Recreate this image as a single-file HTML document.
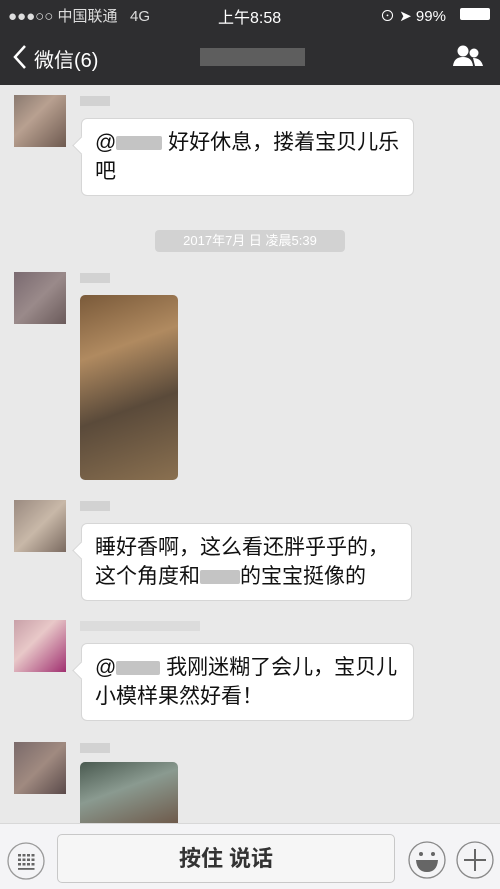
<!DOCTYPE html>
<html><head><meta charset="utf-8"><style>
*{margin:0;padding:0;box-sizing:border-box}
body{width:500px;height:889px;overflow:hidden;background:#e9e9e9;font-family:"Liberation Sans","Noto Sans CJK SC",sans-serif;position:relative}
.top{position:absolute;left:0;top:0;width:500px;height:85px;background:#2e2e30;color:#fff}
.abs{position:absolute}
.av{position:absolute;left:14px;width:52px;height:52px;background:linear-gradient(135deg,#8a7a70,#b8a090 40%,#6e5a50);}
.bub{position:absolute;left:81px;background:#fff;border:1px solid #d6d6d6;border-radius:6px;font-size:21px;line-height:29px;color:#111;padding:9px 13px}
.bub:before{content:"";position:absolute;left:-7px;top:20px;width:12px;height:12px;background:#fff;border-left:1px solid #d6d6d6;border-bottom:1px solid #d6d6d6;transform:rotate(45deg)}
.blur{display:inline-block;background:#c4c4c4;height:14px;vertical-align:middle;border-radius:2px}
.name{position:absolute;left:80px;width:30px;height:10px;background:#d2d2d2}
.img{position:absolute;left:80px;width:98px;border-radius:5px;background:linear-gradient(160deg,#7a5a3a,#b08a60 30%,#5a4a3a 60%,#8a7050)}
</style></head><body>
<div class="top">
 <div class="abs" style="left:8px;top:5px;font-size:15px;color:#ddd">●●●○○ 中国联通&nbsp;&nbsp;&nbsp;4G</div>
 <div class="abs" style="left:218px;top:4px;font-size:16px">上午8:58</div>
 <div class="abs" style="left:380px;top:5px;font-size:15px">⊙ ➤ 99%</div>
 <div class="abs" style="left:460px;top:8px;width:30px;height:12px;background:#fff;border-radius:2px"></div>
 <svg class="abs" style="left:12px;top:44px" width="16" height="26"><path d="M13 2 L3 13 L13 24" stroke="#fff" stroke-width="2.5" fill="none"/></svg>
 <div class="abs" style="left:34px;top:44px;font-size:20px">微信(6)</div>
 <div class="abs" style="left:200px;top:48px;width:105px;height:18px;background:#6a6a6a;opacity:.8"></div>
 <svg class="abs" style="left:452px;top:44px" width="32" height="24"><circle cx="11" cy="7" r="5.5" fill="#fff"/><path d="M1 22 Q2 13 11 13 Q20 13 21 22Z" fill="#fff"/><circle cx="22" cy="9" r="4.5" fill="#fff"/><path d="M21 14 Q29 14 31 22 L23 22Z" fill="#fff"/></svg>
</div>

<div class="av" style="top:95px"></div><div class="name" style="top:96px"></div>
<div class="bub" style="top:118px;width:333px;height:78px">@<span class="blur" style="width:46px"></span> 好好休息，搂着宝贝儿乐<br>吧</div>

<div class="abs" style="left:155px;top:230px;width:190px;height:22px;background:#d2d2d2;border-radius:4px;color:#fff;font-size:13px;text-align:center;line-height:22px">2017年7月 日 凌晨5:39</div>

<div class="av" style="top:272px;background:linear-gradient(135deg,#7a6a70,#9a8a8a 50%,#6a5a5a)"></div><div class="name" style="top:273px"></div>
<div class="img" style="top:295px;height:185px"></div>

<div class="av" style="top:500px;background:linear-gradient(135deg,#9a8a80,#c8b8a8 50%,#7a6a60)"></div><div class="name" style="top:501px"></div>
<div class="bub" style="top:523px;width:331px;height:78px">睡好香啊，这么看还胖乎乎的，<br>这个角度和<span class="blur" style="width:40px"></span>的宝宝挺像的</div>

<div class="av" style="top:620px;background:linear-gradient(135deg,#c8a0a8,#e8c8c8 40%,#a03070)"></div><div class="name" style="top:621px;width:120px;background:#dcdcdc"></div>
<div class="bub" style="top:643px;width:333px;height:78px">@<span class="blur" style="width:44px"></span> 我刚迷糊了会儿，宝贝儿<br>小模样果然好看！</div>

<div class="av" style="top:742px;background:linear-gradient(135deg,#7a6a6a,#a08a80 50%,#5a4a4a)"></div><div class="name" style="top:743px"></div>
<div class="img" style="top:762px;height:70px;background:linear-gradient(160deg,#4a5a50,#8a9a90 40%,#6a5040)"></div>

<div class="abs" style="left:0;top:823px;width:500px;height:66px;background:#f4f4f6;border-top:1px solid #d8d8d8">
 <svg class="abs" style="left:6px;top:17px" width="40" height="40"><circle cx="20" cy="20" r="18" fill="none" stroke="#999" stroke-width="1.3"/><g fill="#666"><rect x="12" y="13" width="3" height="2.5"/><rect x="16.5" y="13" width="3" height="2.5"/><rect x="21" y="13" width="3" height="2.5"/><rect x="25.5" y="13" width="3" height="2.5"/><rect x="12" y="17.5" width="3" height="2.5"/><rect x="16.5" y="17.5" width="3" height="2.5"/><rect x="21" y="17.5" width="3" height="2.5"/><rect x="25.5" y="17.5" width="3" height="2.5"/><rect x="12" y="22" width="3" height="2.5"/><rect x="16.5" y="22" width="3" height="2.5"/><rect x="21" y="22" width="3" height="2.5"/><rect x="25.5" y="22" width="3" height="2.5"/><rect x="12" y="27" width="16.5" height="1.8"/></g></svg>
 <div class="abs" style="left:57px;top:10px;width:338px;height:49px;border:1px solid #c8c8c8;border-radius:5px;background:#f6f6f6;text-align:center;line-height:47px;font-size:22px;color:#333;font-weight:bold">按住 说话</div>
 <svg class="abs" style="left:407px;top:16px" width="40" height="40"><circle cx="20" cy="20" r="18" fill="none" stroke="#888" stroke-width="1.3"/><circle cx="14" cy="14" r="2" fill="#666"/><circle cx="26" cy="14" r="2" fill="#666"/><path d="M9 20 Q20 20 31 20 Q30 32 20 32 Q10 32 9 20Z" fill="#666"/></svg>
 <svg class="abs" style="left:455px;top:16px" width="40" height="40"><circle cx="20" cy="20" r="18" fill="none" stroke="#888" stroke-width="1.3"/><path d="M20 9 V31 M9 20 H31" stroke="#666" stroke-width="2"/></svg>
</div>
</body></html>
